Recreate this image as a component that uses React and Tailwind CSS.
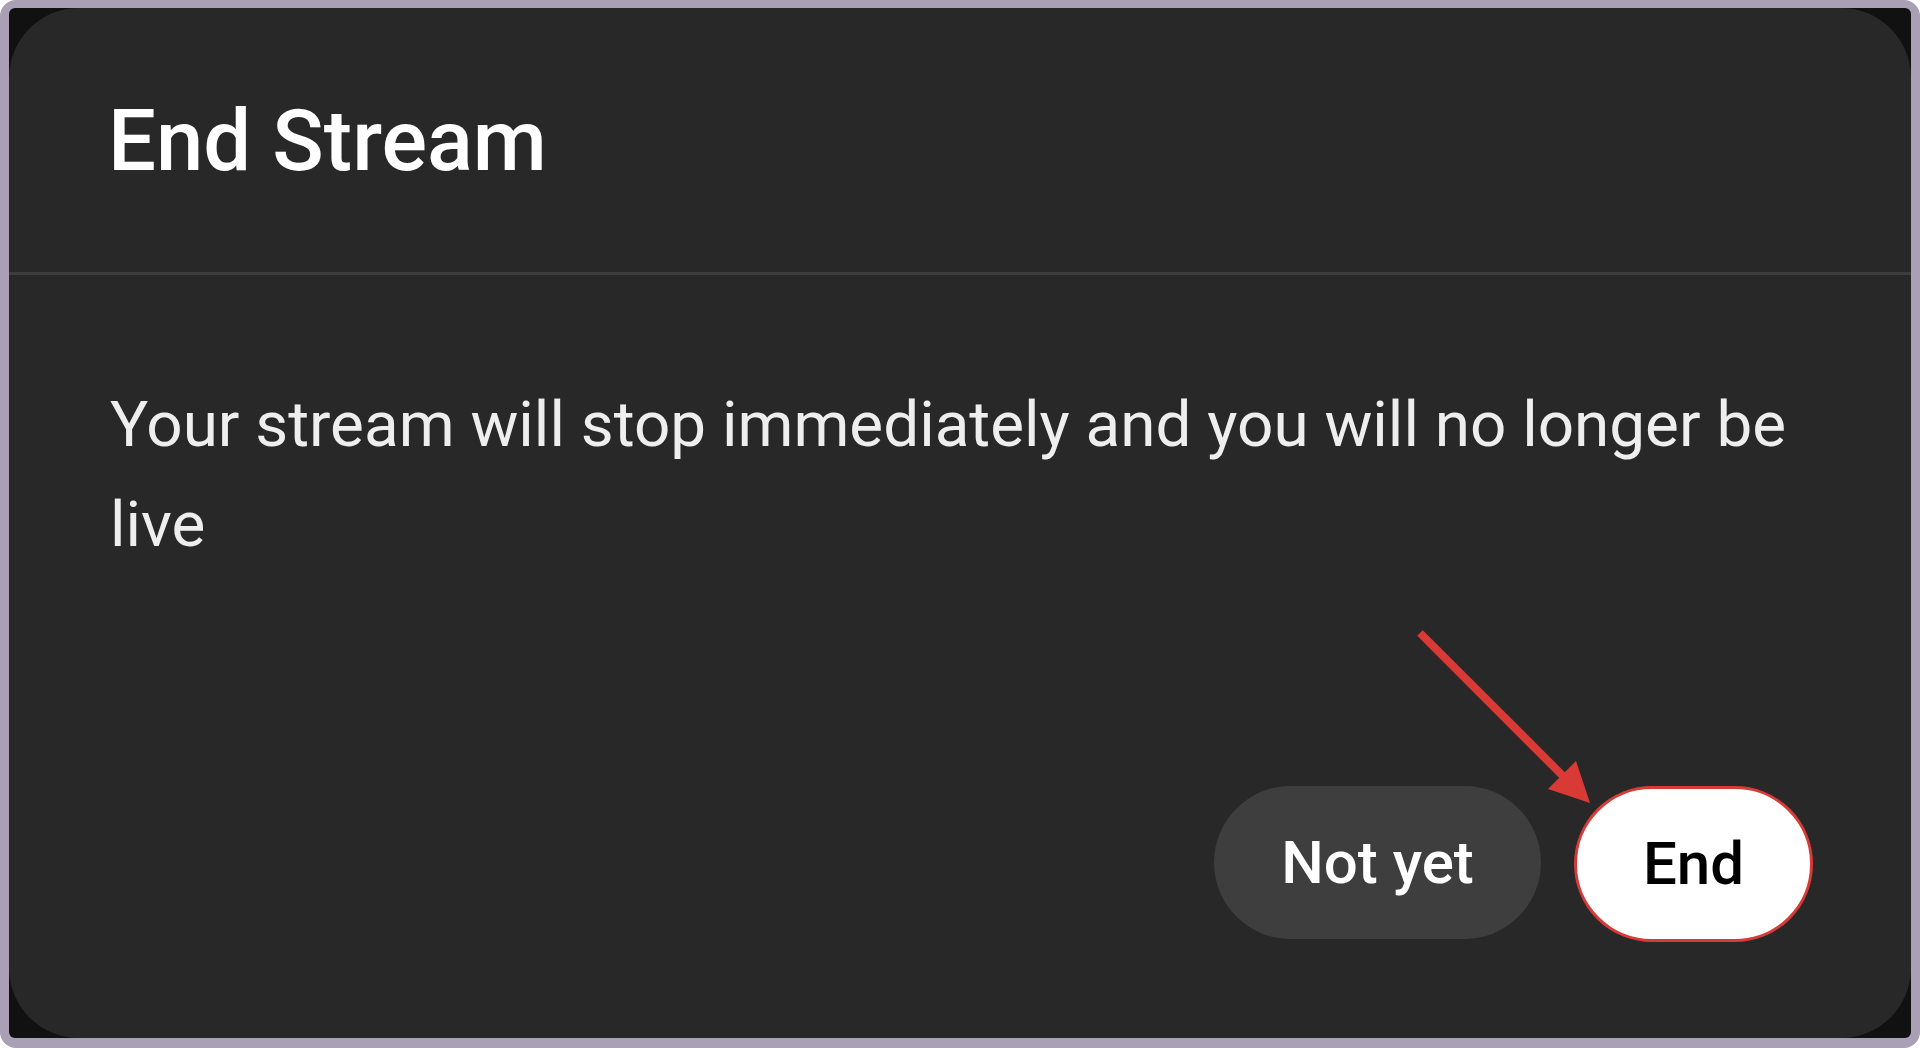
export default function App() {
  return (
    <div className="relative w-[1920px] h-[1048px] bg-white" style={{ fontFamily: "Roboto, 'Noto Sans', sans-serif" }}>
      <div className="w-full h-full bg-[#aaa0b5] rounded-[16px] pt-[8px] pl-[9px] pr-[9px] pb-[10px]">
        <div className="w-full h-full bg-[#111111] rounded-[6px]">
          <div className="w-full h-full bg-[#282828] rounded-[70px] flex flex-col">
            <div className="h-[267px] shrink-0 border-b-[3px] border-[#3c3c3c] px-[99px] pt-[82px]">
              <h1 className="text-[85px] leading-[1.2] font-medium text-white">End Stream</h1>
            </div>
            <div className="flex-1 flex flex-col px-[98px] pt-[100px] pb-[96px]">
              <p className="pl-[3px] text-[63.8px] leading-[100px] text-[#eeeeee]">
                Your stream will stop immediately and you will no longer be live
              </p>
              <div className="mt-auto flex justify-end gap-[33px]">
                <button className="w-[327px] h-[153px] rounded-full bg-[#3e3e3e] text-white text-[60px] font-medium">
                  Not yet
                </button>
                <button className="w-[239px] h-[156px] rounded-full bg-white border-[3px] border-[#d63b38] text-black text-[60px] font-medium">
                  End
                </button>
              </div>
            </div>
          </div>
        </div>
      </div>
      <svg className="absolute left-0 top-0 pointer-events-none" width="1920" height="1048">
        <line x1="1420" y1="633" x2="1566" y2="779" stroke="#d93a35" strokeWidth="8" />
        <polygon points="1590,803 1548,789 1576,761" fill="#d93a35" />
      </svg>
    </div>
  );
}
